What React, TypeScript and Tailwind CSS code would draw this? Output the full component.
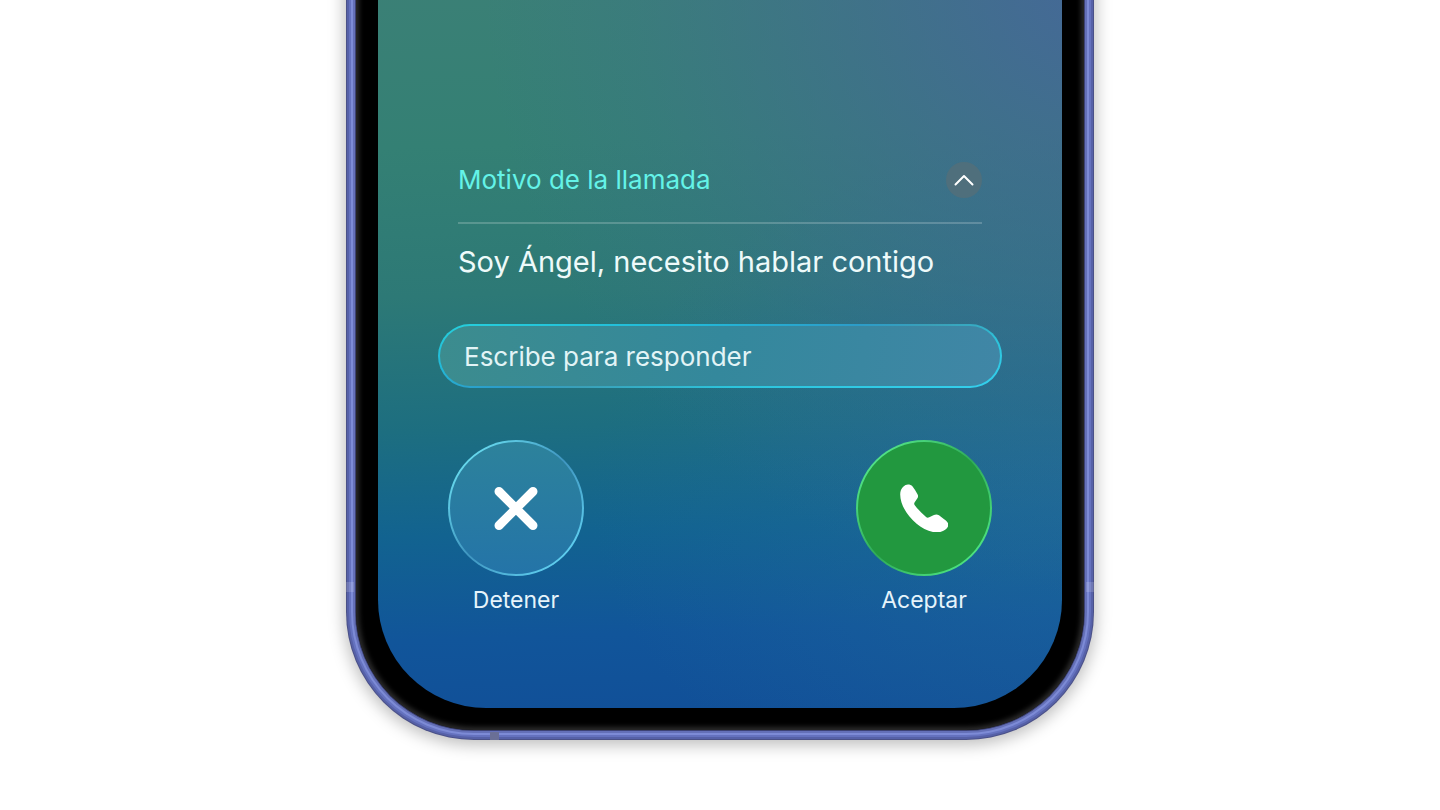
import React, { useState } from 'react';

const XIcon = () => (
  <svg className="w-12 h-12" viewBox="0 0 48 48" fill="none" stroke="white" strokeWidth="9" strokeLinecap="round" aria-hidden="true">
    <path d="M7 7.500 41 41.500M41 7.500 7 41.500" />
  </svg>
);

const PhoneIcon = () => (
  <svg className="w-12 h-12" viewBox="0 0 48 48" fill="white" aria-hidden="true">
    <path d="M8 0.500C5 0.500 0.200 3.800 0.200 10.500C0.200 27.500 20.500 48.400 37 48.400C43.500 48.400 48.400 43.800 48.400 40.800C48.400 38.600 46.500 36.900 43.800 34.900L39 31.300C37.400 30.300 35.600 30.200 34 31L29.200 33.300C28 33.900 26.800 33.700 25.800 32.800C21.700 29.300 18 25.400 14.800 21.300C14 20.300 14 19.200 14.700 18.200L17.400 14.200C18.300 12.800 18.300 11.600 17.500 10.200C16 7.500 14.500 5 12.600 2.500C11.400 1 9.800 0.500 8 0.500Z" />
  </svg>
);

interface CallButtonProps {
  id: string;
  label: string;
  ringClass: string;
  fillClass: string;
  onClick: () => void;
  children: React.ReactNode;
}

const CallButton = ({ id, label, ringClass, fillClass, onClick, children }: CallButtonProps) => (
  <div className="flex flex-col items-center gap-2">
    <button
      id={id}
      aria-label={label}
      onClick={onClick}
      className={`w-34 h-34 rounded-full p-[2px] cursor-pointer ${ringClass}`}
    >
      <span className={`w-full h-full rounded-full flex items-center justify-center ${fillClass}`}>
        {children}
      </span>
    </button>
    <label htmlFor={id} className="text-[23px] leading-8 text-[#e6f4fb]">{label}</label>
  </div>
);

function App() {
  const [expanded, setExpanded] = useState(true);
  const [reply, setReply] = useState('');
  const [status, setStatus] = useState<'ringing' | 'stopped' | 'accepted'>('ringing');

  return (
    <main className="min-h-screen bg-white flex justify-center items-start px-3 pb-16 font-['Inter',sans-serif]" data-status={status}>
      {/* Phone body */}
      <div className="relative w-full max-w-[728px] -mt-4 px-[22px] pb-[22px] bg-black rounded-b-[118px] shadow-[inset_0_0_5px_3px_#2c2c2c,0_0_0_1px_#3d4274,0_0_0_3px_#6470b8,0_0_0_5px_#7d8bd6,0_0_0_7px_#6572bf,0_0_0_9px_#5661a8,0_0_0_10px_#4b5188,0_3px_16px_12px_rgba(0,0,0,0.26)]">
        {/* Antenna bands */}
        <span className="absolute -left-[10px] bottom-[138px] w-[8px] h-[10px] bg-white/15" />
        <span className="absolute -right-[10px] bottom-[138px] w-[8px] h-[10px] bg-white/15" />
        <span className="absolute left-[134px] -bottom-[10px] w-[9px] h-[8px] bg-[#6a6f96]" />

        {/* Screen */}
        <div className="rounded-b-[108px] px-[60px] pt-[178px] pb-[92px] bg-[radial-gradient(circle_at_105%_0%,rgba(70,102,155,0.9)_0%,rgba(68,104,150,0.6)_22%,rgba(64,108,150,0.2)_45%,rgba(64,108,150,0)_60%),radial-gradient(ellipse_at_105%_70%,rgba(36,108,158,0.55)_0%,rgba(36,108,158,0)_50%),linear-gradient(178deg,#3b8076_0%,#348074_22%,#2d7976_42%,#1d6e80_60%,#126390_74%,#11559a_88%,#114f98_100%)]">
          <section className="px-5">
            <div className="flex items-center justify-between pb-6 border-b-2 border-white/20">
              <h1 className="text-[26px] leading-9 text-[#64f3e8]">Motivo de la llamada</h1>
              <button
                aria-label="Mostrar motivo"
                aria-expanded={expanded}
                onClick={() => setExpanded(!expanded)}
                className="w-9 h-9 rounded-full bg-[#4f6f7c] flex items-center justify-center cursor-pointer"
              >
                <svg className="w-5 h-5" viewBox="0 0 20 20" fill="none" stroke="white" strokeWidth="2" strokeLinecap="round" strokeLinejoin="round" aria-hidden="true">
                  <path d={expanded ? 'M1.500 14.500 10 6l8.500 8.500' : 'M1.500 6l8.500 8.500 8.500-8.500'} />
                </svg>
              </button>
            </div>
            {expanded && (
              <p className="pt-4 text-[29px] leading-11 text-[#eefafa]">Soy Ángel, necesito hablar contigo</p>
            )}
          </section>

          <div className="mt-10 rounded-full p-[2px] bg-[linear-gradient(170deg,#26d0dc_0%,#22b8d8_28%,#2c9cc8_46%,#3aa0b8_54%,#2cc4dc_70%,#34d0ee_100%)]">
            <input
              type="text"
              aria-label="Escribe para responder"
              placeholder="Escribe para responder"
              value={reply}
              onChange={(e) => setReply(e.target.value)}
              className="block w-full h-15 rounded-full px-6 text-[26px] text-white placeholder:text-[#e2f4f6] outline-none bg-[linear-gradient(100deg,#3c8c8e_0%,#34889c_50%,#4086a6_100%)]"
            />
          </div>

          <div className="mt-13 px-2.5 flex justify-between">
            <CallButton
              id="stop"
              label="Detener"
              onClick={() => setStatus('stopped')}
              ringClass="bg-[linear-gradient(135deg,#6be0f2_10%,#3f95c0_50%,#62d4f4_90%)]"
              fillClass="bg-linear-to-b from-[#2d829b] to-[#2474a8]"
            >
              <XIcon />
            </CallButton>
            <CallButton
              id="accept"
              label="Aceptar"
              onClick={() => setStatus('accepted')}
              ringClass="bg-[linear-gradient(135deg,#56e88c_10%,#2fab58_50%,#50e884_90%)]"
              fillClass="bg-[#22983f]"
            >
              <PhoneIcon />
            </CallButton>
          </div>
        </div>
      </div>
    </main>
  );
}

export default App;
